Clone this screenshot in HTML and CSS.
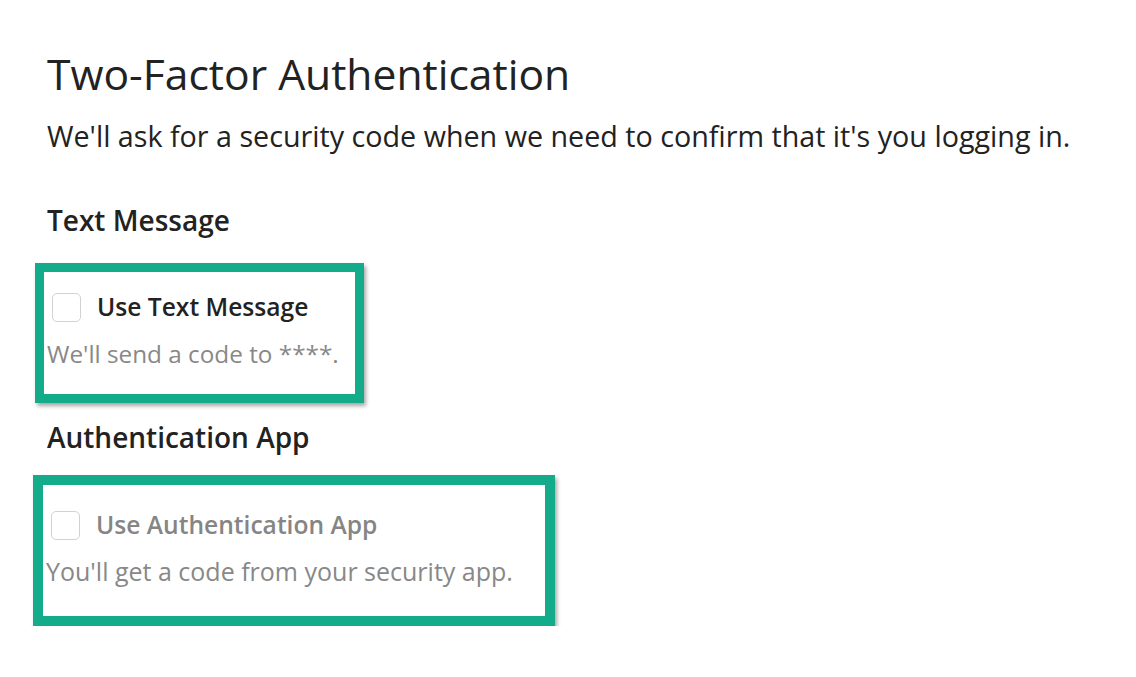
FILE: index.html
```html
<!DOCTYPE html>
<html lang="en">
<head>
  <meta charset="UTF-8">
  <meta name="viewport" content="width=device-width, initial-scale=1.0">
  <title>Two-Factor Authentication</title>
  <link rel="stylesheet" href="styles.css">
</head>
<body>
  <div class="page">
    <h1 class="page-title">Two-Factor Authentication</h1>
    <p class="lead">We'll ask for a security code when we need to confirm that it's you logging in.</p>

    <!-- Text message -->
    <h2 class="section-title">Text Message</h2>
    <div class="option option-sms">
      <label class="option-row">
        <span class="checkbox"></span>
        <span class="option-label">Use Text Message</span>
      </label>
      <p class="option-desc">We'll send a code to ****.</p>
    </div>

    <!-- Authentication app -->
    <h2 class="section-title section-app">Authentication App</h2>
    <div class="option option-app">
      <label class="option-row disabled">
        <span class="checkbox"></span>
        <span class="option-label">Use Authentication App</span>
      </label>
      <p class="option-desc">You'll get a code from your security app.</p>
    </div>
  </div>
</body>
</html>
```

FILE: styles.css
```css
body {
  margin: 0;
  padding: 0;
  font-family: 'Open Sans', sans-serif;
  background-color: #fff;
  color: #222;
}

.page {
  padding: 45px 0 0 47px;
}

.page-title {
  font-size: 42.6px;
  font-weight: 400;
  line-height: 56px;
  margin: 0;
}

.lead {
  font-size: 28.7px;
  line-height: 38px;
  margin: 16px 0 0;
}

.section-title {
  font-size: 28px;
  font-weight: 600;
  line-height: 38px;
  margin: 46px 0 0;
}

.section-app {
  margin-top: 15px;
}

.option {
  box-sizing: border-box;
  border: 9px solid #14ab8a;
  box-shadow: 2px 3px 4px rgba(0, 0, 0, 0.35);
  margin-left: -12px;
}

.option-sms {
  width: 329px;
  height: 140px;
  margin-top: 24px;
  padding: 17px 0 0 3px;
}

.option-app {
  width: 522px;
  height: 151px;
  margin-top: 19px;
  margin-left: -14px;
  border-width: 10px;
  padding: 22px 0 0 3px;
}

.option-row {
  display: flex;
  align-items: center;
  gap: 16px;
  padding-left: 5px;
}

.checkbox {
  box-sizing: border-box;
  width: 29px;
  height: 29px;
  border: 1.5px solid #d2d2d2;
  border-radius: 5px;
  flex-shrink: 0;
}

.option-label {
  font-size: 24.6px;
  font-weight: 600;
  line-height: 36px;
}

.option-row.disabled .option-label {
  color: #858585;
}

.option-desc {
  font-size: 24.3px;
  line-height: 36px;
  margin: 11px 0 0;
  color: #888;
}

.option-app .option-desc {
  font-size: 25px;
  margin-top: 10px;
}
```
